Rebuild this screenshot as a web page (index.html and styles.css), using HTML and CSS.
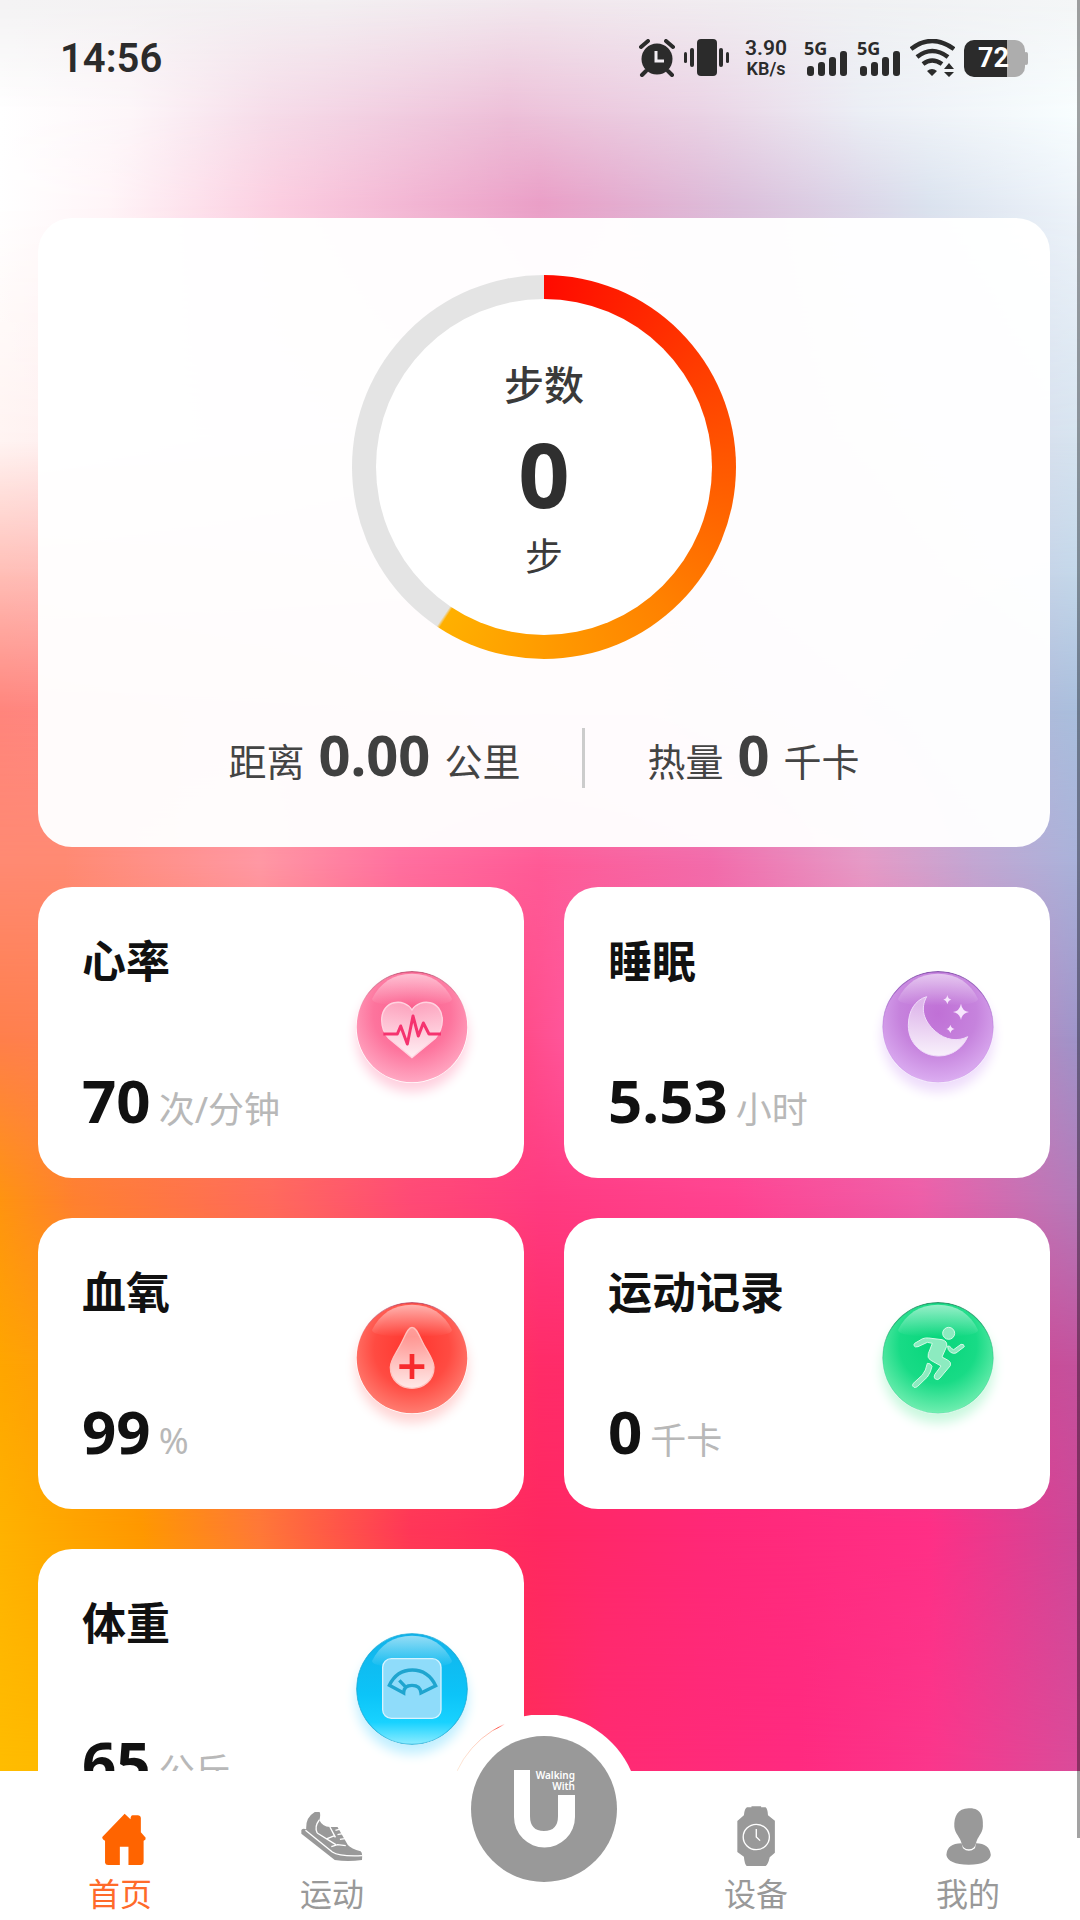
FILE: index.html
```html
<!DOCTYPE html>
<html lang="zh-CN">
<head>
<meta charset="utf-8">
<meta name="viewport" content="width=device-width, initial-scale=1">
<title>首页</title>
<link rel="stylesheet" href="styles.css">
</head>
<body>
<div class="app">
  <div class="backdrop" aria-hidden="true">
    <div class="band band-1"></div>
    <div class="band band-2"></div>
    <div class="band band-3"></div>
    <div class="band band-4"></div>
    <div class="band band-5"></div>
    <div class="band band-6"></div>
    <div class="band band-7"></div>
    <div class="band band-8"></div>
    <div class="band band-9"></div>
    <div class="band band-10"></div>
    <div class="band band-11"></div>
    <div class="band band-12"></div>
  </div>

  <header class="status">
    <time class="clock">14:56</time>
    <div class="status-icons">
      <svg class="ic-alarm" viewBox="0 0 36 38" aria-hidden="true">
        <circle cx="18" cy="20" r="15.500"/>
        <path d="M2 8L9 2M34 8L27 2M7 32L3 36M29 32L33 36" stroke="#2b2b2b" stroke-width="4" stroke-linecap="round" fill="none"/>
        <path d="M17 12v10h8" stroke="#f2edf3" stroke-width="3" fill="none"/>
      </svg>
      <svg class="ic-vibrate" viewBox="0 0 46 38" aria-hidden="true">
        <rect x="13" y="0" width="20" height="37" rx="4"/>
        <rect x="6" y="9" width="4" height="19" rx="2"/><rect x="0" y="13" width="3" height="11" rx="1.500"/>
        <rect x="35" y="9" width="4" height="19" rx="2"/><rect x="42" y="13" width="3" height="11" rx="1.500"/>
      </svg>
      <div class="speed"><span class="speed-value">3.90</span><span class="speed-unit">KB/s</span></div>
      <div class="signal">
        <span class="signal-label">5G</span>
        <svg class="ic-bars" viewBox="0 0 41 26" aria-hidden="true"><rect x="0" y="15" width="7" height="10" rx="3"/><rect x="11" y="11" width="7" height="14" rx="3"/><rect x="22" y="6" width="7" height="19" rx="3"/><rect x="33" y="0" width="7" height="25" rx="3"/></svg>
      </div>
      <div class="signal">
        <span class="signal-label">5G</span>
        <svg class="ic-bars" viewBox="0 0 41 26" aria-hidden="true"><rect x="0" y="15" width="7" height="10" rx="3"/><rect x="11" y="11" width="7" height="14" rx="3"/><rect x="22" y="6" width="7" height="19" rx="3"/><rect x="33" y="0" width="7" height="25" rx="3"/></svg>
      </div>
      <svg class="ic-wifi" viewBox="0 0 45 38" aria-hidden="true">
        <path d="M1 10Q22 -6 44 10M7 18Q22 6 38 18M13 25Q22 18 32 25" stroke="#2b2b2b" stroke-width="4.500" fill="none"/>
        <path d="M17 32Q22 28 27 32L22 37ZM34 30L39 24L44 30ZM34 33H44L39 38Z"/>
      </svg>
      <div class="battery"><span class="battery-text">72</span></div>
    </div>
  </header>

  <main class="content">
    <section class="steps">
      <div class="ring">
        <div class="ring-inner">
          <h1 class="ring-title">步数</h1>
          <strong class="ring-value">0</strong>
          <span class="ring-unit">步</span>
        </div>
      </div>
      <div class="stats">
        <p class="stat">距离 <strong>0.00</strong> 公里</p>
        <span class="divider"></span>
        <p class="stat">热量 <strong>0</strong> 千卡</p>
      </div>
    </section>

    <div class="grid">
      <article class="card">
        <div class="card-text"><h2>心率</h2><p><strong>70</strong><span>次/分钟</span></p></div>
        <svg class="ball ball-pink" viewBox="0 0 336 336" aria-hidden="true">
          <defs>
            <radialGradient id="pink" cx=".5" cy=".38" r=".7"><stop offset="0" stop-color="#fb5e8d"/><stop offset=".5" stop-color="#fd749d"/><stop offset=".85" stop-color="#ffa3bf"/><stop offset="1" stop-color="#ffc8d8"/></radialGradient>
            <linearGradient id="shine" x2="0" y2="1"><stop offset="0" stop-color="#fff" stop-opacity=".55"/><stop offset="1" stop-color="#fff" stop-opacity="0"/></linearGradient>
            <linearGradient id="glass" x2="0" y2="1"><stop offset="0" stop-color="#fff" stop-opacity=".4"/><stop offset="1" stop-color="#fff" stop-opacity=".88"/></linearGradient>
            <linearGradient id="rim" x2="0" y2="1"><stop offset="0" stop-color="#a0123c" stop-opacity=".6"/><stop offset=".5" stop-color="#fff" stop-opacity="0"/></linearGradient>
          </defs>
          <circle cx="168" cy="168" r="166" fill="url(#pink)" stroke="url(#rim)" stroke-width="4"/>
          <path d="M48 84C72 35 112 8 168 8S265 35 288 84Q288 104 168 104T48 84Z" fill="url(#shine)"/>
          <g transform="translate(-50 -63)">
            <path d="M218 323L148 265Q127 243 127 210C127 150 195 142 218 180C242 142 309 150 309 210Q309 240 288 265Z" fill="url(#glass)" stroke="#ffd3e0" stroke-width="4"/>
            <path d="M132 252H174L184 228L204 282L221 198L237 258L252 219L269 252H305" fill="none" stroke="#f5336f" stroke-width="9" stroke-linejoin="round"/>
          </g>
        </svg>
      </article>

      <article class="card">
        <div class="card-text"><h2>睡眠</h2><p><strong>5.53</strong><span>小时</span></p></div>
        <svg class="ball ball-purple" viewBox="0 0 336 336" aria-hidden="true">
          <defs><radialGradient id="purple" cx=".5" cy=".38" r=".7"><stop offset="0" stop-color="#c070d6"/><stop offset=".5" stop-color="#c683dd"/><stop offset=".85" stop-color="#d9a9ef"/><stop offset="1" stop-color="#ecd3fa"/></radialGradient>
          <linearGradient id="rim2" x2="0" y2="1"><stop offset="0" stop-color="#6b3099" stop-opacity=".75"/><stop offset=".6" stop-color="#b070e0" stop-opacity=".2"/></linearGradient></defs>
          <circle cx="168" cy="168" r="166" fill="url(#purple)" stroke="url(#rim2)" stroke-width="4"/>
          <path d="M48 84C72 35 112 8 168 8S265 35 288 84Q288 104 168 104T48 84Z" fill="url(#shine)"/>
          <g transform="translate(-66 -65)">
            <path d="M200 142C165 152 145 185 145 228C145 282 186 320 236 320C278 320 309 294 323 262C295 277 257 274 226 246C191 215 180 178 200 142Z" fill="url(#glass)" stroke="#f0dcfa" stroke-width="3"/>
            <path d="M303 163Q306 185 327 188Q306 191 303 212Q299 191 279 188Q299 185 303 163ZM262 137Q264 149 274 151Q264 153 262 165Q260 153 250 151Q260 149 262 137ZM271 226Q273 236 284 239Q273 241 271 252Q269 241 259 239Q269 236 271 226Z" fill="#f7e6fd"/>
          </g>
        </svg>
      </article>

      <article class="card">
        <div class="card-text"><h2>血氧</h2><p><strong>99</strong><span>%</span></p></div>
        <svg class="ball ball-red" viewBox="0 0 336 336" aria-hidden="true">
          <defs><radialGradient id="red" cx=".5" cy=".42" r=".62"><stop offset="0" stop-color="#ff342d"/><stop offset=".55" stop-color="#ff4b42"/><stop offset="1" stop-color="#ff8478"/></radialGradient></defs>
          <circle cx="168" cy="168" r="166" fill="url(#red)" stroke="url(#rim)" stroke-width="4"/>
          <path d="M48 84C72 35 112 8 168 8S265 35 288 84Q288 104 168 104T48 84Z" fill="url(#shine)"/>
          <g transform="translate(-50 -66)">
            <path d="M218 142C232 142 240 170 254 195C272 227 284 242 284 262C284 300 254 325 218 325S153 300 153 262C153 242 167 225 183 195C197 170 205 142 218 142Z" fill="url(#glass)" stroke="#ffc1bd" stroke-width="4"/>
            <path d="M218 222V297M180 260H255" stroke="#f72a2c" stroke-width="14"/>
          </g>
        </svg>
      </article>

      <article class="card">
        <div class="card-text"><h2>运动记录</h2><p><strong>0</strong><span>千卡</span></p></div>
        <svg class="ball ball-green" viewBox="0 0 336 336" aria-hidden="true">
          <defs><radialGradient id="green" cx=".5" cy=".38" r=".7"><stop offset="0" stop-color="#06d67b"/><stop offset=".5" stop-color="#18db86"/><stop offset=".85" stop-color="#68ecac"/><stop offset="1" stop-color="#a9f8cf"/></radialGradient>
          <linearGradient id="rim3" x2="0" y2="1"><stop offset="0" stop-color="#067a4c" stop-opacity=".75"/><stop offset=".6" stop-color="#20c080" stop-opacity=".25"/></linearGradient></defs>
          <circle cx="168" cy="168" r="166" fill="url(#green)" stroke="url(#rim3)" stroke-width="4"/>
          <path d="M48 84C72 35 112 8 168 8S265 35 288 84Q288 104 168 104T48 84Z" fill="url(#shine)"/>
          <g transform="translate(-66 -66)" fill="#8cebc0" stroke="#d2fbe6" stroke-width="3" stroke-linejoin="round">
            <circle cx="266" cy="160" r="18"/>
            <path d="M164 190L188 176Q196 173 206 174L246 179Q263 183 260 199L246 231L266 242Q274 247 271 257L240 294Q234 302 226 297Q220 292 224 284L243 258L211 240Q201 233 205 221L217 190L202 187L174 200Q165 203 162 197Q161 193 164 190Z"/>
            <path d="M202 250Q198 272 187 285L159 311Q155 319 162 322Q167 324 173 319L202 291Q213 276 216 259Q212 249 202 250Z"/>
            <path d="M263 198Q270 196 274 205L281 209L303 193Q312 191 313 200L288 219Q280 222 272 217Q262 210 263 198Z"/>
          </g>
        </svg>
      </article>

      <article class="card">
        <div class="card-text"><h2>体重</h2><p><strong>65</strong><span>公斤</span></p></div>
        <svg class="ball ball-blue" viewBox="0 0 336 336" aria-hidden="true">
          <defs><linearGradient id="blue" x2="0" y2="1"><stop offset="0" stop-color="#12b3ea"/><stop offset=".55" stop-color="#0cc4f8"/><stop offset=".8" stop-color="#18d2ff"/><stop offset="1" stop-color="#8cecff"/></linearGradient></defs>
          <circle cx="168" cy="168" r="166" fill="url(#blue)" stroke="#19a9d6" stroke-opacity=".7" stroke-width="4"/>
          <path d="M48 84C72 35 112 8 168 8S265 35 288 84Q288 104 168 104T48 84Z" fill="url(#shine)"/>
          <g transform="translate(-50 -69)">
            <rect x="130" y="146" width="175" height="179" rx="26" fill="#8fdcfa" stroke="#d5f3ff" stroke-width="4"/>
            <path d="M150 226Q172 180 219 180T289 227L245 249Q243 226 218 226T193 249ZM180 211L200 232" fill="none" stroke="#1fa5cf" stroke-width="10"/>
          </g>
        </svg>
      </article>
    </div>
  </main>

  <span class="scroll-thumb" aria-hidden="true"></span>

  <nav class="tabs" aria-label="主导航">
    <svg class="bump" viewBox="0 0 174 56" aria-hidden="true">
      <defs><linearGradient id="edge"><stop offset="0" stop-color="#f8c8a0" stop-opacity=".4"/><stop offset=".4" stop-color="#ff8a70" stop-opacity=".6"/><stop offset=".47" stop-color="#ff4a40"/><stop offset=".55" stop-color="#fff"/></linearGradient></defs>
      <path d="M0 56A95 95 0 0 1 174 56Z" fill="#fff"/>
      <path d="M0 56A95 95 0 0 1 87 1" fill="none" stroke="url(#edge)" stroke-width="1"/>
    </svg>
    <a class="tab tab-active" href="#home">
      <svg viewBox="89 106 62 62" aria-hidden="true"><g transform="scale(.3444 .3333)">
        <path d="M362 341L297 411Q296 418 305 422V488Q306 495 314 495H348V440H373V495H410Q417 494 417 487V422Q424 420 423 413L409 397V354Q408 346 400 346H385Q379 347 379 358Z"/></g>
      </svg>
      <span>首页</span>
    </a>
    <a class="tab" href="#sport">
      <svg viewBox="301 106 62 62" aria-hidden="true"><g transform="scale(.3444 .3333)">
        <path d="M889 384Q888 352 914 336H928Q932 345 927 360Q936 380 958 381H980L1010 435Q1020 446 1047 454Q1053 458 1051 480Q1010 486 972 480L875 401V390Q880 384 889 388Z"/>
        <path d="M927 360Q912 380 921 399M887 391L965 456Q985 470 1051 467M948 417L970 408M962 440L980 434L1004 437M921 399L975 434M958 381L974 412M974 391L992 386M980 404L999 400M987 418L1006 415" stroke="#fff" stroke-width="4" fill="none"/></g>
      </svg>
      <span>运动</span>
    </a>
    <a class="tab-main" href="#walk" aria-label="Walking With U">
      <svg viewBox="471 36 146 146" aria-hidden="true">
        <path d="M514 70H530V116Q530 131 544 131T558 116V95H575V117A30.500 30.500 0 0 1 514 117Z" fill="#fff"/>
        <text class="logo-text" x="575" y="79" text-anchor="end">Walking</text>
        <text class="logo-text" x="575" y="90" text-anchor="end">With</text>
      </svg>
    </a>
    <a class="tab" href="#device">
      <svg viewBox="185 106 62 62" aria-hidden="true"><g transform="scale(.3444 .3333)">
        <path d="M614 319H642V322H655Q661 326 662 346L682 362V458L667 472Q662 495 655 498H600Q594 492 592 470L573 456V363L592 346Q594 325 601 322H614Z"/>
        <circle cx="628" cy="411" r="38" fill="none" stroke="#fff" stroke-width="4"/><path d="M628 387V411L639 422" fill="none" stroke="#fff" stroke-width="4"/></g>
      </svg>
      <span>设备</span>
    </a>
    <a class="tab" href="#me">
      <svg viewBox="397 106 62 62" aria-hidden="true"><g transform="scale(.3444 .3333)">
        <path d="M1224 430Q1182 430 1180 465Q1184 493 1245 494Q1305 493 1309 465Q1305 430 1266 430L1263 445Q1245 460 1228 445Z"/>
        <path d="M1245 325C1280 323 1288 350 1286 379C1285 402 1270 410 1266 430Q1262 448 1245 448T1224 430C1220 410 1205 402 1203 380C1202 350 1212 326 1245 325Z"/></g>
      </svg>
      <span>我的</span>
    </a>
  </nav>
</div>
</body>
</html>
```
FILE: styles.css
```css
* { box-sizing: border-box; margin: 0; padding: 0; }

body {
  font-family: "Noto Sans", "Noto Sans CJK SC", sans-serif;
  color: #111;
}

.app {
  position: relative;
  display: flex;
  flex-direction: column;
  height: 100vh;
  overflow: hidden;
}

/* Each band paints one horizontal colour run and fades in from the band above it. */
.backdrop { position: absolute; inset: 0; z-index: -1; }
.band { position: absolute; inset: 0; }
.band-1 { background: linear-gradient(90deg, #f4f3f4, #f3f0f2 30%, #f2e8ee 50%, #f0f1f3 80%, #f4f6f7); }
.band-2 {
  background: linear-gradient(90deg, #fff, #fdf6f9 12%, #f6dce9 25%, #edbfd8 47%, #ead3e5 65%, #ebeef5 80%, #f8feff);
  mask-image: linear-gradient(transparent 0%, #000 6%);
}
.band-3 {
  background: linear-gradient(90deg, #fff, #fff5f8 10%, #fbcde0 26%, #ea9fc7 50%, #dcbfdb 68%, #dbe3ef 86%, #eef4fa);
  mask-image: linear-gradient(transparent 6%, #000 10.5%);
}
.band-4 {
  background: linear-gradient(90deg, #fff4f2, #fbd0e0 40%, #e6b0d0 60%, #d6e4f0);
  mask-image: linear-gradient(transparent 10.5%, #000 23%);
}
.band-5 {
  background: linear-gradient(90deg, #ffbdb5, #fbb0c8 40%, #e6a0c8 60%, #c3d8ea);
  mask-image: linear-gradient(transparent 23%, #000 30%);
}
.band-6 {
  background: linear-gradient(90deg, #ff857c, #fb90a8 40%, #e690c0 60%, #a9bfdd);
  mask-image: linear-gradient(transparent 30%, #000 37%);
}
.band-7 {
  background: linear-gradient(90deg, #ff8a72, #ff8a72 6%, #ff98a4 24%, #ff6f9f 37%, #ff5a96 50%, #f26cab 66%, #e69ac6 80%, #c3a6d2 90%, #a9b2da);
  mask-image: linear-gradient(transparent 37%, #000 45%);
}
.band-8 {
  background: linear-gradient(90deg, #ff7f4c, #ff8060 20%, #ff4a86 48%, #ff5599 52%, #ee75b0 85%, #9d95ca);
  mask-image: linear-gradient(transparent 45%, #000 54%);
}
.band-9 {
  background: linear-gradient(90deg, #ff9410, #ff8030 7%, #ff6a5c 25%, #ff4a76 38%, #ff3a80 50%, #ff4391 68%, #ee5ea8 85%, #b47ab9);
  mask-image: linear-gradient(transparent 54%, #000 62.5%);
}
.band-10 {
  background: linear-gradient(90deg, #ffa600, #ff8a20 15%, #ff2c68 50%, #ff2a78 70%, #c3529d);
  mask-image: linear-gradient(transparent 62.5%, #000 71%);
}
.band-11 {
  background: linear-gradient(90deg, #ffb200, #ff9800 13%, #ff7838 24%, #ff3658 38%, #ff2861 50%, #ff2878 66%, #ff2f86 86%, #cd4898);
  mask-image: linear-gradient(transparent 71%, #000 79.6%);
}
.band-12 {
  background: linear-gradient(90deg, #ffbc00, #ffae00 20%, #ff2d55 47%, #ff2b72 56%, #ff2a80 74%, #fb368b 86%, #d94c9a);
  mask-image: linear-gradient(transparent 79.6%, #000 92%);
}

/* Status bar */
.status {
  display: flex;
  justify-content: space-between;
  align-items: center;
  height: 116px;
  flex: none;
  padding: 0 55px 0 60px;
  color: #2b2b2b;
  font-family: Roboto, sans-serif;
}
.clock { font-size: 40px; font-weight: 600; }
.status-icons { display: flex; align-items: center; gap: 9px; }
.status-icons svg { display: block; fill: #2b2b2b; }
.ic-alarm { width: 36px; height: 38px; }
.ic-vibrate { width: 46px; height: 38px; }
.speed {
  display: flex;
  flex-direction: column;
  align-items: center;
  margin: 0 8px 0 6px;
  font-weight: 600;
}
.speed-value { font-size: 21px; line-height: 22px; }
.speed-unit { font-size: 18px; line-height: 20px; }
.signal { position: relative; width: 44px; height: 38px; }
.signal-label {
  position: absolute;
  top: 0;
  left: 0;
  font: 700 18px/18px "Noto Sans", sans-serif;
}
.ic-bars { position: absolute; right: 0; bottom: 0; width: 41px; height: 26px; }
.ic-wifi { width: 45px; height: 38px; }
.battery {
  position: relative;
  display: flex;
  align-items: center;
  justify-content: flex-end;
  width: 61px;
  height: 37px;
  padding-right: 16px;
  border-radius: 10px;
  background: linear-gradient(90deg, #2b2b2b 70%, #adadad 70%);
}
.battery::after {
  content: "";
  position: absolute;
  right: -3px;
  top: 12px;
  width: 4px;
  height: 13px;
  border-radius: 2px;
  background: #adadad;
}
.battery-text { color: #fff; font-size: 27px; font-weight: 700; }

/* Scrolling content */
.content {
  flex: 1;
  min-height: 0;
  overflow-y: auto;
  scrollbar-width: none;
  padding: 102px 30px 40px 38px;
}
.steps {
  display: flex;
  flex-direction: column;
  align-items: center;
  padding: 57px 20px 43px;
  border-radius: 34px;
  background: rgba(255, 255, 255, .97);
}
.ring {
  display: flex;
  width: 384px;
  height: 384px;
  padding: 24px;
  border-radius: 50%;
  background: conic-gradient(#ff0a00, #ff5500 86deg, #ff8200 140deg, #ffb000 213deg, #e4e4e4 214deg);
}
.ring-inner {
  flex: 1;
  display: flex;
  flex-direction: column;
  align-items: center;
  justify-content: center;
  border-radius: 50%;
  background: #fff;
  color: #3a3a3a;
}
.ring-title { font-size: 40px; line-height: 56px; font-weight: 500; }
.ring-value { font-size: 90px; line-height: 120px; color: #2f2f2f; }
.ring-unit { font-size: 38px; line-height: 44px; font-weight: 400; }
.stats {
  display: flex;
  align-items: center;
  gap: 62px;
  margin-top: 52px;
}
.stat {
  display: flex;
  align-items: baseline;
  gap: 14px;
  font-size: 38px;
  line-height: 86px;
  font-weight: 400;
  color: #444;
}
.stat strong { font-size: 56px; color: #404040; }
.divider { width: 3px; height: 60px; background: #ccc; }

.grid {
  display: grid;
  grid-template-columns: 1fr 1fr;
  gap: 40px;
  margin-top: 40px;
}
.card {
  display: flex;
  justify-content: space-between;
  height: 291px;
  padding: 48px 56px 36px 44px;
  border-radius: 34px;
  background: #fff;
}
.card-text { display: flex; flex-direction: column; justify-content: space-between; }
.card h2 { font-size: 44px; line-height: 52px; font-weight: 700; }
.card p { display: flex; align-items: baseline; gap: 8px; line-height: 64px; }
.card strong { font-size: 60px; }
.card p span { font-size: 36px; font-weight: 400; color: #b8b8b8; }
.ball {
  flex: none;
  width: 112px;
  height: 112px;
  margin-top: 36px;
  border-radius: 50%;
}
.ball-pink { box-shadow: 0 9px 12px #ffd0df; }
.ball-purple { box-shadow: 0 9px 12px #eedcfb; }
.ball-red { box-shadow: 0 9px 12px #ffd5d5; }
.ball-green { box-shadow: 0 9px 12px #c9f8de; }
.ball-blue { box-shadow: 0 9px 12px #c0efff; }

.scroll-thumb {
  position: absolute;
  top: 0;
  right: 0;
  bottom: 82px;
  z-index: 3;
  width: 3px;
  background: rgba(0, 0, 0, .36);
}

/* Bottom tabs */
.tabs {
  position: relative;
  display: grid;
  grid-template-columns: repeat(5, 1fr);
  flex: none;
  padding: 35px 6px 6px 14px;
  background: #fff;
}
.bump {
  position: absolute;
  bottom: 100%;
  left: calc(50% + 4px);
  width: 174px;
  height: 56px;
  margin-left: -87px;
}
.tab {
  display: flex;
  flex-direction: column;
  align-items: center;
  gap: 6px;
  color: #999;
  font-size: 32px;
  line-height: 40px;
  font-weight: 400;
  text-decoration: none;
}
.tab svg { width: 62px; height: 62px; fill: #999; }
.tab-active { color: #ff6a2a; }
.tab-active svg { fill: #ff6400; }
.tab-main {
  position: relative;
  justify-self: center;
  width: 146px;
  height: 146px;
  margin: -70px 0 -40px;
  border-radius: 50%;
  background: #999;
}
.tab-main svg { display: block; width: 146px; height: 146px; }
.logo-text { font: 600 10px "Noto Sans", sans-serif; fill: #fff; }
```
